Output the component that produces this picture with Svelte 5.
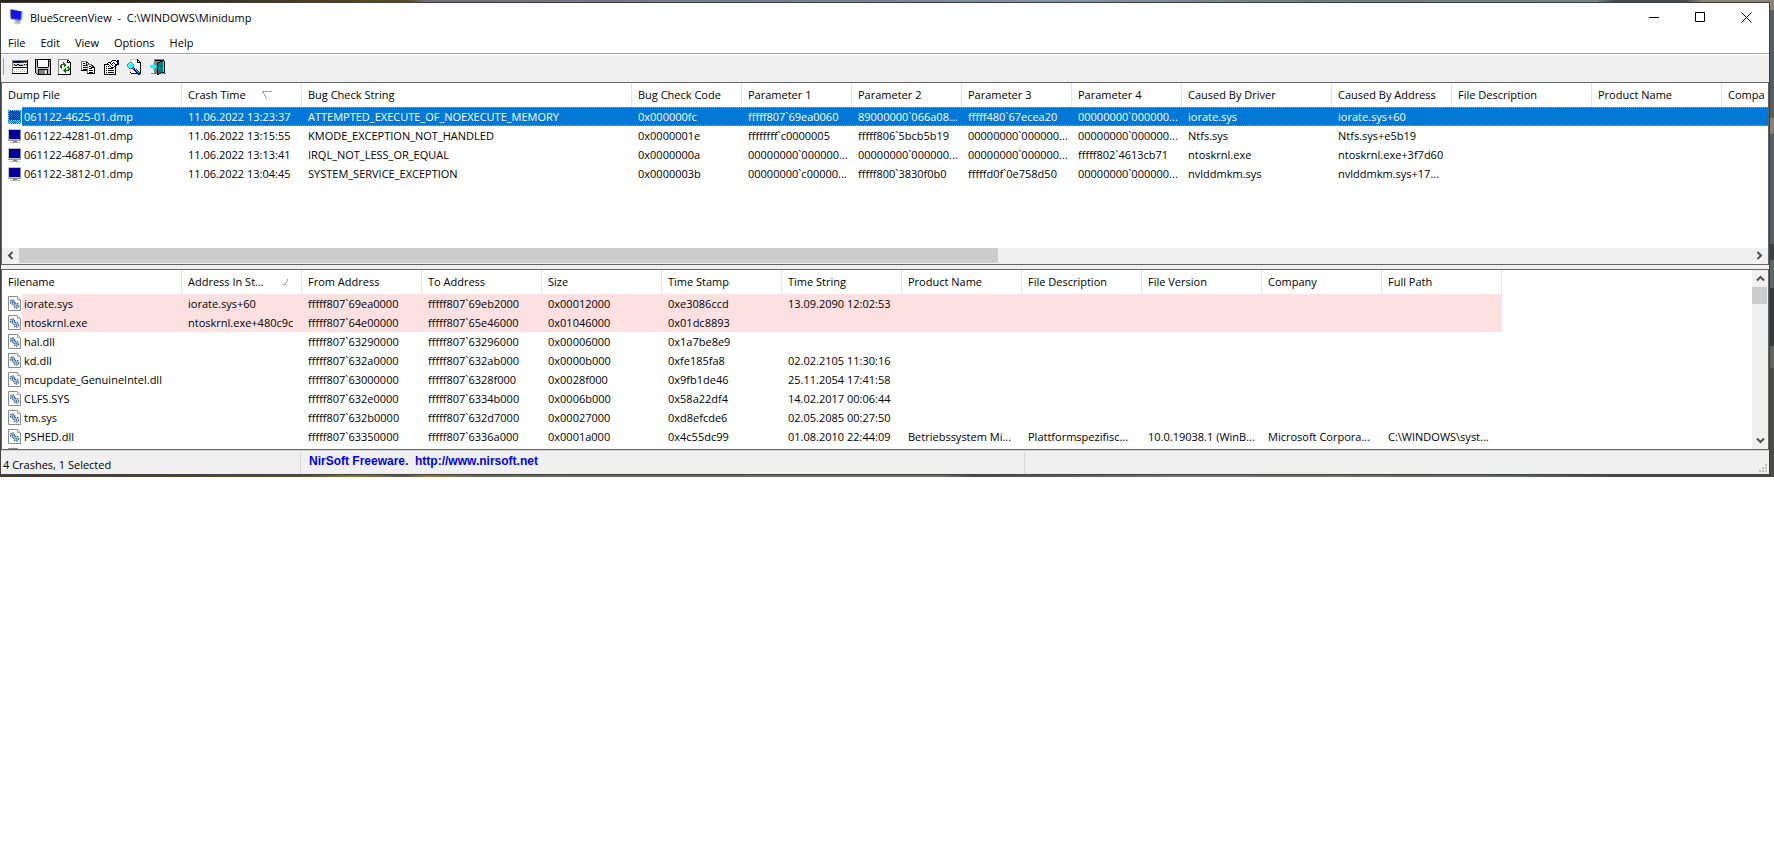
<script>
  const palette = {
    k: '#000000', w: '#ffffff', g: '#808080', l: '#c0c0c0', n: '#000080',
    c: '#00ffff', t: '#008080', b: '#0000ff', e: '#008000'
  };

  // Turns rows of palette letters into horizontal runs of pixels.
  function runs(rows) {
    const out = [];
    rows.forEach((row, y) => {
      let x = 0;
      while (x < row.length) {
        const ch = row[x];
        let end = x + 1;
        while (end < row.length && row[end] === ch) end++;
        if (palette[ch]) out.push({ x, y, w: end - x, fill: palette[ch] });
        x = end;
      }
    });
    return out;
  }

  const tools = [
    { label: 'Advanced Options', rows: [
      '................',
      'gggggggggggggggk',
      'gnnnnnnnnnnnnnnk',
      'gnnnnnnnnnlnlnlk',
      'gwwwwwwwwwwwwwwk',
      'glkllkklllllklkk',
      'gllkkllkkkkllllk',
      'gwwwwwwwwwwwwwwk',
      'gkkkkkkkkkkkkkkk',
      'gwwwwwwwwwwwwwwk',
      'gwlwlwlwlwlwlwwk',
      'gwwwwwwwwwwwwwwk',
      'gwlwlwlwlwlwlwwk',
      'gwwwwwwwwwwwwwwk',
      'kkkkkkkkkkkkkkkk',
      '................'] },
    { label: 'Save Selected Items', rows: [
      'kkkkkkkkkkkkkkkk',
      'klkwwwwwwwwwwklk',
      'klkwwwwwwwwwwkkk',
      'klkwwwwwwwwwwklk',
      'klkwwwwwwwwwwklk',
      'klkwwwwwwwwwwklk',
      'klkwwwwwwwwwwklk',
      'klkwwwwwwwwwwklk',
      'kllkkkkkkkkkkllk',
      'kllllllllllllllk',
      'kllkkkkkkkkkkllk',
      'kllkggggggwlkllk',
      'kllkggggggwlkllk',
      'kllkggggggwlkllk',
      '.klkggggggwlkllk',
      '..kkkkkkkkkkkkkk'] },
    { label: 'Refresh', rows: [
      'gggggggggg......',
      'gwwwwwwwwkk.....',
      'gwwwwwwwwkwk....',
      'gwwwwewwwkkkk...',
      'gwwwweewwwwwk...',
      'gwweeeeewwwwk...',
      'gweewweewwwwk...',
      'gweewwewwwewk...',
      'gweewwwwweewk...',
      'gwwewwwewweek...',
      'gwwwwweewweek...',
      'gwwwweeeeeewk...',
      'gwwwwweewwwwk...',
      'gwwwwwwewwwwk...',
      'gwwwwwwwwwwwk...',
      'kkkkkkkkkkkkk...'] },
    { label: 'Copy Selected Items', rows: [
      '................',
      '................',
      'gggggg..........',
      'gwwwwkk.........',
      'gwkkwkwk........',
      'gwwwwkggggg.....',
      'gwkkkkgwwwkk....',
      'gwwwwwgwkkwkk...',
      'gwkkkkgwwwkkkk..',
      'gwwwwwgwkkkwwk..',
      'gwkkkkgwwwwwwk..',
      'kkkkkkgwkkkkwk..',
      '......gwwwwwwk..',
      '......gwkkkkwk..',
      '......kkkkkkkk..',
      '................'] },
    { label: 'Properties', rows: [
      '................',
      '........kkkk.nn.',
      '.......kwwwwknn.',
      '....kkkwwkwwwnn.',
      '...kwwkwkwkwwnn.',
      'kkkkkwwkwwwkknn.',
      'kwwwwkwwkwwkk...',
      'kwkwkwkwwwkk....',
      'kwwwwwwkkkwk....',
      'kwkwkkkkkwwk....',
      'kwwwwwwwwwwk....',
      'kwkwkkkkkkwk....',
      'kwwwwwwwwwwk....',
      'kwkwkkkkkkwk....',
      'kwwwwwwwwwwk....',
      'kkkkkkkkkkkk....'] },
    { label: 'Find', rows: [
      '...lllllllk.....',
      '...lwwwwwwkk....',
      '...lwwwwwwkwk...',
      '..gggwwwwwkkkk..',
      '.gcwcgwwwwwwwk..',
      'gcwcwcgwwwwwwk..',
      'gwcwcwgwwwwwwk..',
      'gcwcwcgwwwwwwk..',
      '.gcwcgbwwwwwwk..',
      '..gggbcbwwwwwk..',
      '...lwwnbcbwwwk..',
      '...lwwwnbcbwwk..',
      '...lwwwwnbcbwk..',
      '...kwwwwwnbcbk..',
      '....kkkkkknbbn..',
      '...........nn...'] },
    { label: 'Exit', rows: [
      '....gggggggggg..',
      '....gkkkkkkkkk..',
      '....ggggggkkttk.',
      '....ggggkktttck.',
      '...cgggktttttck.',
      '...ccggktttttck.',
      'ccccccgktttttck.',
      'cccccccktttktck.',
      'ccccccgktttttck.',
      '...ccggktttttck.',
      '...cgggktttttck.',
      '....gggktttttck.',
      '....gggktttttck.',
      '....gggktttkkkk.',
      '.ggggggktkk.gggg',
      '.......kk.......'] }
  ];

  const menus = ['File', 'Edit', 'View', 'Options', 'Help'];

  const dumpCols = [
    ['Dump File', 180], ['Crash Time', 120], ['Bug Check String', 330], ['Bug Check Code', 110],
    ['Parameter 1', 110], ['Parameter 2', 110], ['Parameter 3', 110], ['Parameter 4', 110],
    ['Caused By Driver', 150], ['Caused By Address', 120], ['File Description', 140],
    ['Product Name', 130], ['Compa', 120]
  ];
  const dumps = [
    ['061122-4625-01.dmp', '11.06.2022 13:23:37', 'ATTEMPTED_EXECUTE_OF_NOEXECUTE_MEMORY', '0x000000fc', 'fffff807`69ea0060', '89000000`066a08...', 'fffff480`67ecea20', '00000000`000000...', 'iorate.sys', 'iorate.sys+60', '', '', ''],
    ['061122-4281-01.dmp', '11.06.2022 13:15:55', 'KMODE_EXCEPTION_NOT_HANDLED', '0x0000001e', 'ffffffff`c0000005', 'fffff806`5bcb5b19', '00000000`000000...', '00000000`000000...', 'Ntfs.sys', 'Ntfs.sys+e5b19', '', '', ''],
    ['061122-4687-01.dmp', '11.06.2022 13:13:41', 'IRQL_NOT_LESS_OR_EQUAL', '0x0000000a', '00000000`000000...', '00000000`000000...', '00000000`000000...', 'fffff802`4613cb71', 'ntoskrnl.exe', 'ntoskrnl.exe+3f7d60', '', '', ''],
    ['061122-3812-01.dmp', '11.06.2022 13:04:45', 'SYSTEM_SERVICE_EXCEPTION', '0x0000003b', '00000000`c00000...', 'fffff800`3830f0b0', 'fffffd0f`0e758d50', '00000000`000000...', 'nvlddmkm.sys', 'nvlddmkm.sys+17...', '', '', '']
  ];

  const driverCols = [
    ['Filename', 180], ['Address In St...', 120], ['From Address', 120], ['To Address', 120],
    ['Size', 120], ['Time Stamp', 120], ['Time String', 120], ['Product Name', 120],
    ['File Description', 120], ['File Version', 120], ['Company', 120], ['Full Path', 120]
  ];
  const none = ['', '', '', '', ''];
  const drivers = [
    ['iorate.sys', 'iorate.sys+60', 'fffff807`69ea0000', 'fffff807`69eb2000', '0x00012000', '0xe3086ccd', '13.09.2090 12:02:53', ...none],
    ['ntoskrnl.exe', 'ntoskrnl.exe+480c9c', 'fffff807`64e00000', 'fffff807`65e46000', '0x01046000', '0x01dc8893', '', ...none],
    ['hal.dll', '', 'fffff807`63290000', 'fffff807`63296000', '0x00006000', '0x1a7be8e9', '', ...none],
    ['kd.dll', '', 'fffff807`632a0000', 'fffff807`632ab000', '0x0000b000', '0xfe185fa8', '02.02.2105 11:30:16', ...none],
    ['mcupdate_GenuineIntel.dll', '', 'fffff807`63000000', 'fffff807`6328f000', '0x0028f000', '0x9fb1de46', '25.11.2054 17:41:58', ...none],
    ['CLFS.SYS', '', 'fffff807`632e0000', 'fffff807`6334b000', '0x0006b000', '0x58a22df4', '14.02.2017 00:06:44', ...none],
    ['tm.sys', '', 'fffff807`632b0000', 'fffff807`632d7000', '0x00027000', '0xd8efcde6', '02.05.2085 00:27:50', ...none],
    ['PSHED.dll', '', 'fffff807`63350000', 'fffff807`6336a000', '0x0001a000', '0x4c55dc99', '01.08.2010 22:44:09', 'Betriebssystem Mi...', 'Plattformspezifisc...', '10.0.19038.1 (WinB...', 'Microsoft Corpora...', 'C:\\WINDOWS\\syst...'],
    ['', '', '', '', '', '', '', ...none]
  ];

  const total = (cols) => cols.reduce((sum, col) => sum + col[1], 0);
  let selected = $state(0);
</script>

{#snippet monitor(active)}
  <svg class="row-icon" width="16" height="16" viewBox="0 0 16 16" shape-rendering="crispEdges" aria-hidden="true">
    <rect x="1" y="1" width="13" height="12" fill="#c4c2bc" />
    <rect x="13" y="2" width="1" height="11" fill="#8d8b86" />
    <rect x="2" y="2" width="11" height="9" fill="#0000a0" />
    <rect x="1" y="12" width="13" height="1" fill="#9a9892" />
    <rect x="6" y="13" width="4" height="1" fill="#77756f" />
    <rect x="3" y="14" width="10" height="1" fill="#b4b2ac" />
    {#if active}
      <rect x="1" y="1" width="13" height="14" fill="url(#checker)" />
    {/if}
  </svg>
{/snippet}

{#snippet page()}
  <svg class="row-icon" width="16" height="17" viewBox="0 0 16 17" aria-hidden="true">
    <path d="M1.5 1.500H10.500L13.500 4.500V15.500H1.500Z" fill="#fbfbfb" stroke="#8b8b8b" />
    <path d="M10.500 1.500V4.500H13.500" fill="#e8e8e8" stroke="#aaa" />
    <circle cx="5.500" cy="7" r="2" fill="#cfe0ee" stroke="#2c5f8e" stroke-dasharray="1.300 .8" stroke-width="1.400" />
    <circle cx="9.300" cy="10.700" r="2.300" fill="#cfe0ee" stroke="#2c5f8e" stroke-dasharray="1.300 .8" stroke-width="1.400" />
    <circle cx="5.500" cy="7" r=".7" fill="#1d4a78" />
    <circle cx="9.300" cy="10.700" r=".8" fill="#1d4a78" />
  </svg>
{/snippet}

{#snippet chevron(d)}
  <svg width="9" height="9" viewBox="0 0 9 9" aria-hidden="true"><path {d} fill="none" stroke="#505050" stroke-width="2" /></svg>
{/snippet}

<div class="desktop">
  <main class="window">
    <header class="titlebar">
      <svg width="16" height="16" viewBox="0 0 16 16" aria-hidden="true">
        <path d="M1 1L3 0L14 2.500L13 11L10 13L1 10Z" fill="#a9b3b6" />
        <path d="M1.500 .5L12.500 2.500L11.500 11L2 9.500Z" fill="#1616e8" />
        <path d="M7 11.500L11 11.500L11 14L6 13Z" fill="#8a9294" />
        <path d="M4 13.500L9 12.500L13 14L8 15.800Z" fill="#bcc4c6" />
      </svg>
      <h1>BlueScreenView&nbsp; -&nbsp; C:\WINDOWS\Minidump</h1>
      <div class="controls">
        <button aria-label="Minimize"><svg width="11" height="11" viewBox="0 0 11 11"><path d="M0 5.500H10" stroke="#000" /></svg></button>
        <button aria-label="Maximize"><svg width="11" height="11" viewBox="0 0 11 11"><path d="M.5 .5H9.500V9.500H.5Z" fill="none" stroke="#000" /></svg></button>
        <button aria-label="Close"><svg width="11" height="11" viewBox="0 0 11 11"><path d="M.5 .5L10.500 10.500M10.500 .5L.5 10.500" stroke="#000" /></svg></button>
      </div>
    </header>

    <nav class="menubar">
      {#each menus as name}<button>{name}</button>{/each}
    </nav>

    <div class="toolbar">
      {#each tools as tool}
        <button aria-label={tool.label}>
          <svg width="16" height="16" viewBox="0 0 16 16" shape-rendering="crispEdges">
            {#each runs(tool.rows) as r}<rect x={r.x} y={r.y} width={r.w} height="1" fill={r.fill} />{/each}
          </svg>
        </button>
      {/each}
    </div>

    <section class="pane dumps">
      <svg class="defs" width="0" height="0" aria-hidden="true">
        <defs>
          <pattern id="checker" width="2" height="2" patternUnits="userSpaceOnUse">
            <rect width="1" height="1" fill="#0078d7" /><rect x="1" y="1" width="1" height="1" fill="#0078d7" />
          </pattern>
        </defs>
      </svg>
      <div class="list">
        <table style:width="{total(dumpCols)}px">
          <colgroup>{#each dumpCols as col}<col style:width="{col[1]}px" />{/each}</colgroup>
          <thead>
            <tr>
              {#each dumpCols as col, i}
                <th scope="col"><div class="head">{col[0]}{#if i === 1}<svg width="10" height="9" viewBox="0 0 10 9" shape-rendering="crispEdges" aria-hidden="true"><path d="M0 0H10V1H0ZM1 1H2V3H1ZM2 3H3V5H2ZM3 5H4V7H3ZM4 7H5V8H4Z" fill="#a0a0a0" /></svg>{/if}</div></th>
              {/each}
            </tr>
          </thead>
          <tbody>
            {#each dumps as row, r}
              <tr class:selected={selected === r} onclick={() => (selected = r)}>
                {#each row as value, i}
                  {#if i === 0}
                    <td class="first"><div class="name">{@render monitor(selected === r)}<span>{value}</span></div></td>
                  {:else}
                    <td>{value}</td>
                  {/if}
                {/each}
              </tr>
            {/each}
          </tbody>
        </table>
      </div>
      <div class="hscroll">
        <button aria-label="Scroll left">{@render chevron('M6.500 1L3 4.500L6.500 8')}</button>
        <div class="track"><div class="thumb"></div></div>
        <button aria-label="Scroll right">{@render chevron('M2.500 1L6 4.500L2.500 8')}</button>
      </div>
    </section>

    <div class="splitter"></div>

    <section class="pane drivers">
      <div class="list">
        <table style:width="{total(driverCols)}px">
          <colgroup>{#each driverCols as col}<col style:width="{col[1]}px" />{/each}</colgroup>
          <thead>
            <tr>
              {#each driverCols as col, i}
                <th scope="col"><div class="head">{col[0]}{#if i === 1}<svg width="10" height="9" viewBox="0 0 10 9" shape-rendering="crispEdges" aria-hidden="true"><path d="M7 1H8V3H7ZM6 3H7V5H6ZM5 5H6V7H5ZM3 6H5V7H3Z" fill="#a0a0a0" /></svg>{/if}</div></th>
              {/each}
            </tr>
          </thead>
          <tbody>
            {#each drivers as row, r}
              <tr class:stack={r < 2}>
                {#each row as value, i}
                  {#if i === 0}
                    <td class="first"><div class="name">{@render page()}<span>{value}</span></div></td>
                  {:else}
                    <td>{value}</td>
                  {/if}
                {/each}
              </tr>
            {/each}
          </tbody>
        </table>
      </div>
      <div class="vscroll">
        <button aria-label="Scroll up">{@render chevron('M1 6.500L4.500 3L8 6.500')}</button>
        <div class="track"><div class="thumb"></div></div>
        <button aria-label="Scroll down">{@render chevron('M1 2.500L4.500 6L8 2.500')}</button>
      </div>
    </section>

    <footer class="status">
      <div class="count">4 Crashes, 1 Selected</div>
      <div class="about"><a href="http://www.nirsoft.net">NirSoft Freeware.&nbsp; http://www.nirsoft.net</a></div>
      <div class="rest">
        <svg width="9" height="9" viewBox="0 0 9 9" shape-rendering="crispEdges" aria-hidden="true">
          <path d="M6 0h2v2h-2zM3 3h2v2h-2zM6 3h2v2h-2zM0 6h2v2h-2zM3 6h2v2h-2zM6 6h2v2h-2z" fill="#bfbfbf" />
        </svg>
      </div>
    </footer>
  </main>
</div>

<style>
  :global(body) {
    background: #fff;
  }
  .desktop {
    padding: 2px 4px 2px 0;
    background:
      linear-gradient(#8d827c 0 10px, #555d60 10px 118px, #8d8078 118px 134px, #555d60 134px 244px, #3c3f41 244px 260px, #5d6668 260px 288px, #35383a 288px 346px, #62625f 346px 368px, #4a4a48 368px) right / 4px 100% no-repeat,
      linear-gradient(90deg, #2a2418 0 100px, #5a4c20 23%, #716c78 24%, #76829a 50%, #8495a8 60%, #6d7779 75%, #778183 90%, #444c50 91% 95%, #8d827c 96%) top / 100% 2px no-repeat,
      linear-gradient(90deg, #40382a 0, #5b4c2d 17%, #8c762c 20%, #57564c 23%, #9a7a2c 24%, #69695a 27%, #706f68 53%, #4b4a4c 55%, #757178 66%, #72705f 76%, #5f6668 85%, #494947 91%) bottom / 100% 2px no-repeat,
      #4a4a48;
  }
  .window {
    border: 1px solid #414141;
    background: #f0f0f0;
    color: #000;
    font: 11px/19px "Open Sans", "Noto Sans", sans-serif;
    overflow: hidden;
  }
  button {
    margin: 0;
    padding: 0;
    border: 0;
    background: none;
    color: inherit;
    font: inherit;
  }
  svg {
    display: block;
    flex: none;
  }
  .titlebar {
    display: flex;
    align-items: center;
    gap: 5px;
    height: 28px;
    padding: 0 0 2px 8px;
    background: #fff;
  }
  h1 {
    flex: 1;
    margin: 0;
    font-size: 11px;
    font-weight: 400;
  }
  .controls {
    display: flex;
  }
  .controls button {
    display: grid;
    place-items: center;
    width: 46px;
    height: 28px;
  }
  .menubar {
    display: flex;
    gap: 1px;
    height: 20px;
    background: #fff;
  }
  .menubar button {
    padding: 0 7px;
    line-height: 20px;
  }
  .toolbar {
    display: flex;
    align-items: center;
    gap: 7px;
    height: 25px;
    padding: 0 0 3px 11px;
    border-top: 1px solid #a0a0a0;
    background:
      linear-gradient(#a0a0a0, #a0a0a0) 2px 4px / 1px 17px no-repeat,
      linear-gradient(#fff, #fff) 0 0 / 100% 1px no-repeat,
      #f0f0f0;
  }
  .pane {
    display: flex;
    overflow: hidden;
    border: 1px solid #646464;
    background: #fff;
  }
  .dumps {
    flex-direction: column;
    height: 181px;
  }
  .drivers {
    height: 179px;
  }
  .defs {
    position: absolute;
  }
  .list {
    flex: 1;
    min-width: 0;
    min-height: 0;
    overflow: hidden;
  }
  table {
    table-layout: fixed;
    border-collapse: separate;
    border-spacing: 0;
  }
  th,
  td {
    box-sizing: border-box;
    padding: 0 0 0 6px;
    overflow: hidden;
    white-space: nowrap;
    text-align: left;
    font-weight: 400;
  }
  th {
    height: 24px;
    border-right: 1px solid #e5e5e5;
  }
  td {
    height: 19px;
    line-height: 19px;
  }
  .head {
    display: flex;
    align-items: center;
    gap: 16px;
    line-height: 24px;
  }
  td.first {
    padding-left: 5px;
  }
  .name {
    display: flex;
    align-items: center;
    height: 19px;
  }
  .row-icon {
    margin-right: -1px;
  }
  .name span {
    flex: 1;
    height: 19px;
    padding-left: 2px;
  }
  .stack td:not(.first),
  .stack .name span {
    background: #fde0e0;
  }
  .selected {
    color: #fff;
  }
  .selected td:not(.first),
  .selected .name span {
    background:
      repeating-linear-gradient(90deg, #e8914a 0 1px, #0078d7 1px 2px) top / 100% 1px no-repeat,
      repeating-linear-gradient(90deg, #e8914a 0 1px, #0078d7 1px 2px) bottom / 100% 1px no-repeat,
      #0078d7;
  }
  .hscroll,
  .vscroll {
    display: flex;
    background: #f0f0f0;
  }
  .hscroll {
    height: 16px;
    padding-bottom: 1px;
    box-sizing: border-box;
  }
  .vscroll {
    flex-direction: column;
    width: 16px;
  }
  .hscroll button,
  .vscroll button {
    display: grid;
    place-items: center;
    width: 17px;
    height: 17px;
  }
  .hscroll button {
    height: 15px;
  }
  .track {
    flex: 1;
  }
  .thumb {
    background: #cdcdcd;
  }
  .hscroll .thumb {
    width: 56.5%;
    height: 15px;
  }
  .vscroll .thumb {
    width: 15px;
    height: 17px;
  }
  .splitter {
    height: 4px;
  }
  .status {
    display: flex;
    height: 22px;
    padding-top: 1px;
    border-top: 1px solid #d7d7d7;
  }
  .count {
    width: 297px;
    padding: 2px 0 0 2px;
    line-height: 22px;
  }
  .about {
    width: 715px;
    padding-left: 8px;
    border: solid #d7d7d7;
    border-width: 0 1px;
    font: bold 12px/19px "Liberation Sans", Arial, sans-serif;
  }
  .about a {
    color: #0000f0;
    text-decoration: none;
  }
  .rest {
    display: flex;
    flex: 1;
    align-items: flex-end;
    justify-content: flex-end;
    padding: 0 1px 1px 0;
  }
</style>
